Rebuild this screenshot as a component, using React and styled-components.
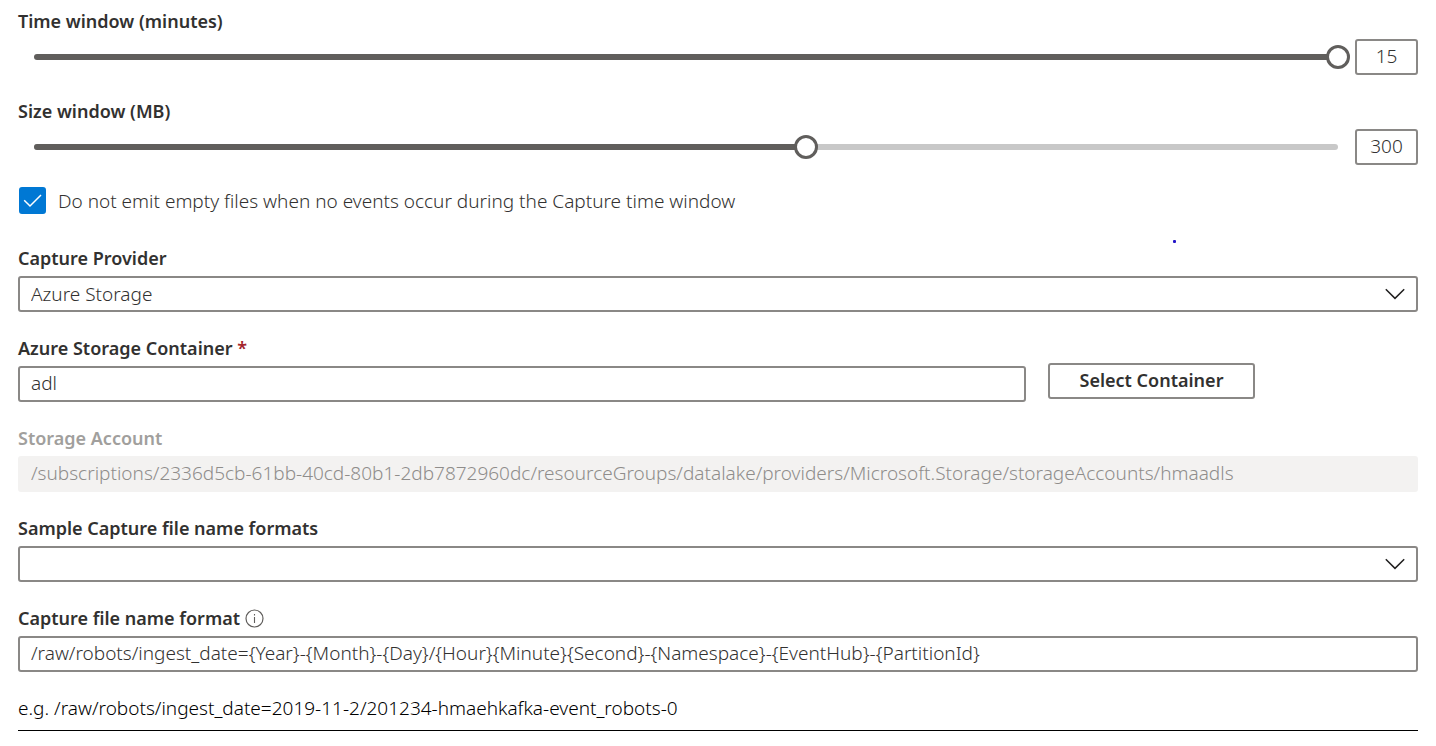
import React, { useId, useState } from "react";
import styled, { createGlobalStyle, css } from "styled-components";

const GlobalStyle = createGlobalStyle`
  *, *::before, *::after { box-sizing: border-box; }
  body {
    margin: 0;
    background: #fff;
    color: #323130;
    font-family: "Segoe UI", "Noto Sans", "Open Sans", sans-serif;
    font-size: 19px;
    font-weight: 300;
    line-height: 24px;
  }
  input, select, button { font: inherit; color: inherit; margin: 0; }
`;

const Form = styled.form`
  padding: 9px 18px 15px;
`;

const Fields = styled.div`
  position: relative;
  display: flex;
  flex-direction: column;
  gap: 24px;
`;

const Field = styled.div`
  display: flex;
  flex-direction: column;
  gap: 6px;
  flex: ${(p) => p.$basis || "none"};
  color: ${(p) => (p.$disabled ? "#a19f9d" : "#323130")};
`;

const LabelRow = styled.div`
  display: flex;
  align-items: center;
  gap: 5px;
`;

const Label = styled.label`
  font-size: 18px;
  font-weight: 600;
`;

const Required = styled.span`
  color: #a4262c;
`;

const box = css`
  height: 36px;
  border: 2px solid #8a8886;
  border-radius: 3px;
  background: #fff;
  outline: none;
`;

const TextBox = styled.input`
  ${box}
  width: 100%;
  padding: 0 11px 2px;
  &:disabled {
    border-color: #f3f2f1;
    background: #f3f2f1;
    color: #8f8d8b;
  }
`;

const ValueBox = styled.input`
  ${box}
  width: 63px;
  padding: 0 0 2px;
  text-align: center;
`;

const Stack = styled.div`
  display: grid;
  align-items: center;
  > * { grid-area: 1 / 1; }
  > svg { pointer-events: none; }
`;

const SelectBox = styled.select`
  ${box}
  appearance: none;
  width: 100%;
  padding: 0 40px 0 11px;
`;

const Chevron = styled.svg`
  justify-self: end;
  margin-right: 13px;
`;

const SliderRow = styled.div`
  display: flex;
  align-items: center;
  gap: 5px;
  padding-left: 4px;
`;

const SliderStack = styled(Stack)`
  flex: 1;
`;

const Rail = styled.div`
  height: 6px;
  margin: 0 12px;
  border-radius: 3px;
  background: #c8c8c8;
  overflow: hidden;
`;

const RailFill = styled.div`
  height: 100%;
  background: #605e5c;
`;

const Range = styled.input`
  appearance: none;
  width: 100%;
  height: 24px;
  background: transparent;
  &::-webkit-slider-thumb {
    appearance: none;
    width: 24px;
    height: 24px;
    border: 3px solid #605e5c;
    border-radius: 50%;
    background: #fff;
  }
`;

const CheckRow = styled.div`
  display: flex;
  align-items: center;
  gap: 12px;
  height: 27px;
  margin: 22px 0 32px;
  padding-left: 1px;
`;

const CheckBox = styled.input`
  appearance: none;
  width: 27px;
  height: 27px;
  border: 2px solid #8a8886;
  border-radius: 3px;
  &:checked {
    border-color: #0078d4;
    background: #0078d4;
  }
`;

const ContainerRow = styled.div`
  display: flex;
  align-items: flex-end;
  gap: 22px;
`;

const Button = styled.button`
  ${box}
  min-width: 207px;
  margin-bottom: 3px;
  padding: 0 20px 2px;
  font-size: 18px;
  font-weight: 600;
`;

const Example = styled.p`
  margin: 0;
  padding-bottom: 10px;
  border-bottom: 1px solid #000;
  color: #000;
  font-weight: 350;
`;

const Dot = styled.i`
  position: absolute;
  top: -6px;
  right: 242px;
  width: 3px;
  height: 3px;
  border-radius: 1px;
  background: #2314c8;
`;

function SliderField({ label, min, max, initial }) {
  const id = useId();
  const [value, setValue] = useState(initial);
  const onChange = (e) => setValue(Number(e.target.value) || min);
  const percent = ((value - min) / (max - min)) * 100;
  return (
    <Field>
      <Label htmlFor={id}>{label}</Label>
      <SliderRow>
        <SliderStack>
          <Rail>
            <RailFill style={{ width: `${percent}%` }} />
          </Rail>
          <Range id={id} type="range" min={min} max={max} value={value} onChange={onChange} />
        </SliderStack>
        <ValueBox aria-label={`${label} value`} value={value} onChange={onChange} />
      </SliderRow>
    </Field>
  );
}

function SelectField({ label, options }) {
  const id = useId();
  return (
    <Field>
      <Label htmlFor={id}>{label}</Label>
      <Stack>
        <SelectBox id={id}>
          {options.map((o) => (
            <option key={o}>{o}</option>
          ))}
        </SelectBox>
        <Chevron width="20" height="12" viewBox="0 0 20 12" fill="none" stroke="#201f1e" strokeWidth="1.5">
          <path d="M.8 1.2 10 10.4l9.2-9.2" />
        </Chevron>
      </Stack>
    </Field>
  );
}

function TextField({ label, value, disabled, required, info, basis }) {
  const id = useId();
  return (
    <Field $disabled={disabled} $basis={basis}>
      <LabelRow>
        <Label htmlFor={id}>
          {label}
          {required && <Required> *</Required>}
        </Label>
        {info && (
          <svg width="19" height="19" viewBox="0 0 19 19" fill="none" stroke="#605e5c" aria-hidden="true">
            <circle cx="9.5" cy="9.5" r="8.5" strokeWidth="1.2" />
            <path d="M9.5 8v6M9.5 5v1.5" strokeWidth="1.1" />
          </svg>
        )}
      </LabelRow>
      <TextBox id={id} type="text" defaultValue={value} disabled={disabled} />
    </Field>
  );
}

export default function App() {
  return (
    <>
      <GlobalStyle />
      <Form onSubmit={(e) => e.preventDefault()}>
        <Fields>
          <SliderField label="Time window (minutes)" min={1} max={15} initial={15} />
          <SliderField label="Size window (MB)" min={10} max={500} initial={300} />
        </Fields>
        <CheckRow>
          <Stack>
            <CheckBox id="skip-empty" type="checkbox" defaultChecked />
            <svg width="27" height="27" viewBox="0 0 27 27" fill="none" stroke="#fff" strokeWidth="1.5">
              <path d="M5.2 13.2 11 19 22 8" />
            </svg>
          </Stack>
          <label htmlFor="skip-empty">
            Do not emit empty files when no events occur during the Capture time window
          </label>
        </CheckRow>
        <Fields>
          <Dot />
          <SelectField label="Capture Provider" options={["Azure Storage", "Azure Data Lake Store"]} />
          <ContainerRow>
            <TextField label="Azure Storage Container" value="adl" required basis="0 0 72%" />
            <Button type="button">Select Container</Button>
          </ContainerRow>
          <TextField
            label="Storage Account"
            value="/subscriptions/2336d5cb-61bb-40cd-80b1-2db7872960dc/resourceGroups/datalake/providers/Microsoft.Storage/storageAccounts/hmaadls"
            disabled
          />
          <SelectField label="Sample Capture file name formats" options={[""]} />
          <TextField
            label="Capture file name format"
            value="/raw/robots/ingest_date={Year}-{Month}-{Day}/{Hour}{Minute}{Second}-{Namespace}-{EventHub}-{PartitionId}"
            info
          />
          <Example>e.g. /raw/robots/ingest_date=2019-11-2/201234-hmaehkafka-event_robots-0</Example>
        </Fields>
      </Form>
    </>
  );
}
